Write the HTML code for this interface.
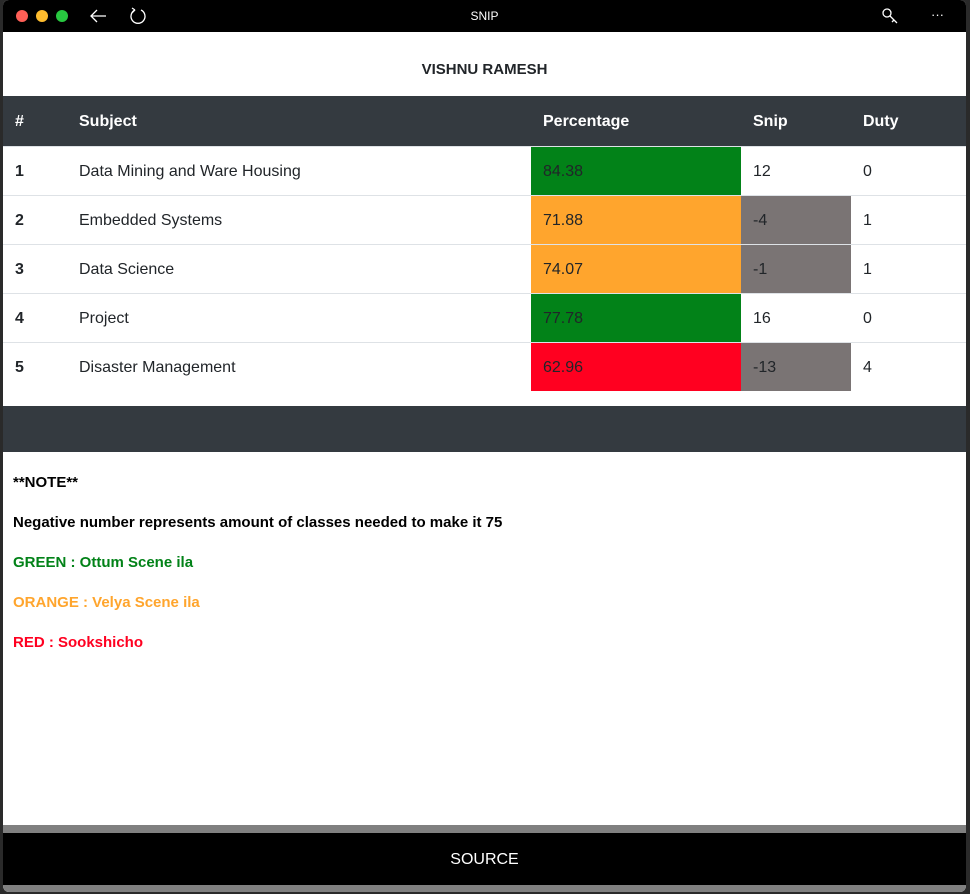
<!DOCTYPE html>
<html><head><style>
*{margin:0;padding:0;box-sizing:border-box}
body{width:970px;height:894px;background:#2a2a2a;font-family:"Liberation Sans",sans-serif;position:relative;overflow:hidden}
.win{position:absolute;left:3px;top:0;width:963px;height:892px;background:#fff;border-radius:6px;overflow:hidden}
.tb{height:32px;background:#000;position:relative;color:#fff}
.dot{position:absolute;top:10px;width:12px;height:12px;border-radius:50%}
.title{position:absolute;left:0;right:0;top:9px;text-align:center;font-size:12px}
h1{font-size:15px;text-align:center;color:#212529;height:64px;line-height:76px;font-weight:bold}
table{border-collapse:collapse;width:963px;font-size:16px;color:#212529}
th{background:#343a40;color:#fff;height:50px;text-align:left;padding-left:12px;padding-top:3px;font-weight:bold}
td{height:49px;border-top:1px solid #dee2e6;padding-left:12px;padding-top:2px}
.g{background:#028218}.o{background:#ffa52d}.r{background:#ff0020}.s{background:#7a7474}
.bar{height:46px;background:#343a40;margin-top:15px}
.notes{padding:22px 10px;font-weight:bold;font-size:15px}
.notes p{height:40px}
.gb{position:absolute;top:825px;left:0;width:963px;height:67px;background:#808080}
.src{position:absolute;top:833px;left:0;width:963px;height:52px;background:#000;color:#fff;text-align:center;line-height:54px;font-size:16px}
</style></head><body>
<div class="win">
<div class="tb">
<div class="dot" style="left:13px;background:#fe5f57"></div>
<div class="dot" style="left:33px;background:#febc2e"></div>
<div class="dot" style="left:53px;background:#28c840"></div>
<svg style="position:absolute;left:86px;top:8px" width="18" height="16"><path d="M17 8H2M8 2L2 8l6 6" stroke="#fff" fill="none" stroke-width="1.3"/></svg>
<svg style="position:absolute;left:126px;top:7px" width="18" height="18"><path d="M6 3A7 7 0 1 0 12 3" stroke="#fff" fill="none" stroke-width="1.3"/><path d="M6 3L3 1M6 3L3 6" stroke="#fff" fill="none" stroke-width="1.2"/></svg>
<div class="title">SNIP</div>
<svg style="position:absolute;left:878px;top:7px" width="18" height="18"><circle cx="6" cy="6" r="4" stroke="#fff" fill="none" stroke-width="1.3"/><path d="M9 9l7 7M13 13l-2 2" stroke="#fff" fill="none" stroke-width="1.3"/></svg>
<div style="position:absolute;left:928px;top:7px;font-size:13px">···</div>
</div>
<h1>VISHNU RAMESH</h1>
<table>
<tr><th style="width:64px">#</th><th style="width:464px">Subject</th><th style="width:210px">Percentage</th><th style="width:110px">Snip</th><th>Duty</th></tr>
<tr><td><b>1</b></td><td>Data Mining and Ware Housing</td><td class="g">84.38</td><td>12</td><td>0</td></tr>
<tr><td><b>2</b></td><td>Embedded Systems</td><td class="o">71.88</td><td class="s">-4</td><td>1</td></tr>
<tr><td><b>3</b></td><td>Data Science</td><td class="o">74.07</td><td class="s">-1</td><td>1</td></tr>
<tr><td><b>4</b></td><td>Project</td><td class="g">77.78</td><td>16</td><td>0</td></tr>
<tr><td><b>5</b></td><td>Disaster Management</td><td class="r">62.96</td><td class="s">-13</td><td>4</td></tr>
</table>
<div class="bar"></div>
<div class="notes">
<p>**NOTE**</p>
<p>Negative number represents amount of classes needed to make it 75</p>
<p style="color:#028218">GREEN : Ottum Scene ila</p>
<p style="color:#ffa52d">ORANGE : Velya Scene ila</p>
<p style="color:#ff0020">RED : Sookshicho</p>
</div>
<div class="gb"></div>
<div class="src">SOURCE</div>
</div>
</body></html>
